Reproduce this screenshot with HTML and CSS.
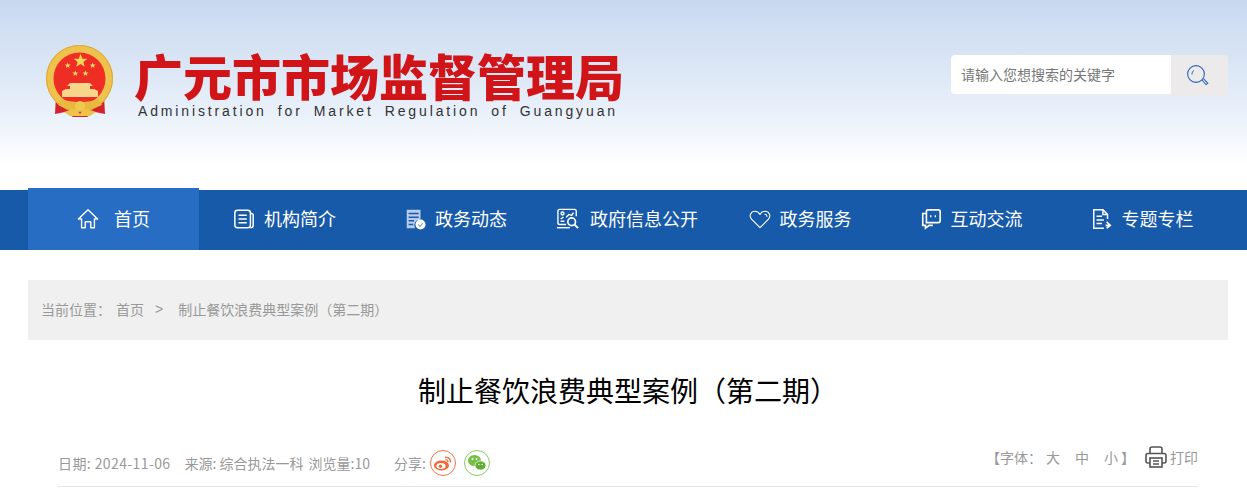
FILE: index.html
```html
<!DOCTYPE html>
<html lang="zh-CN">
<head>
  <meta charset="UTF-8" />
  <title>制止餐饮浪费典型案例（第二期）</title>
  <link rel="stylesheet" href="styles.css">
</head>
<body>
  <header class="top">
    <div class="logo">
      <svg class="emblem" viewBox="0 0 80 80" xmlns="http://www.w3.org/2000/svg">
        <defs>
          <polygon id="star" points="0,-10 2.6,-3.2 9.5,-3.1 4.1,1.3 5.9,8.1 0,4.2 -5.9,8.1 -4.1,1.3 -9.5,-3.1 -2.6,-3.2"/>
        </defs>
        <path d="M16 56 L15 74 L25 72 L33 77 H47 L55 72 L65 74 L64 56 Z" fill="#d2232a"/>
        <circle cx="39.5" cy="38.5" r="33.5" fill="#eec24c"/>
        <circle cx="39.5" cy="38.5" r="33" fill="none" stroke="#dba733" stroke-width="1"/>
        <circle cx="39.5" cy="38.5" r="26" fill="#ee2d24"/>
        <use href="#star" transform="translate(40.5 21) scale(.72)" fill="#f8d458"/>
        <use href="#star" transform="translate(27.7 25.5) scale(.32)" fill="#f8d458"/>
        <use href="#star" transform="translate(52.7 25.5) scale(.32)" fill="#f8d458"/>
        <use href="#star" transform="translate(35.3 33.5) scale(.32)" fill="#f8d458"/>
        <use href="#star" transform="translate(45.5 33.5) scale(.32)" fill="#f8d458"/>
        <path d="M30 43 H50 L53 46 H50 V49 H54 L58 51 V57 H22 V51 L26 49 H30 V46 H27 Z" fill="#f6d68a"/>
        <path d="M22 59 C30 63 50 63 58 59 L62 65 C50 71 30 71 18 65 Z" fill="#e8b83f"/>
        <circle cx="40" cy="66" r="5" fill="#f2c94f"/>
        <path d="M24 72 L36 68 L40 74 L44 68 L56 72 L50 76 H30 Z" fill="#eec24c"/>
      </svg>
      <div class="logo-text">
        <div class="site-name">广元市市场监督管理局</div>
        <div class="site-en">Administration for Market Regulation of Guangyuan</div>
      </div>
    </div>
    <div class="search">
      <div class="search-input">请输入您想搜索的关键字</div>
      <div class="search-btn">
        <svg width="24" height="24" viewBox="0 0 24 24" xmlns="http://www.w3.org/2000/svg" fill="none" stroke="#2a66b8">
          <circle cx="10" cy="10" r="8.4" stroke-width="1.1"/>
          <path d="M6 10.5 C6 8.5 6.6 7.4 7.8 6.4" stroke-width="1"/>
          <path d="M16 16 L20 20.6 L21.8 19.2 L17.4 14.6" stroke-width="1.1"/>
        </svg>
      </div>
    </div>
  </header>

  <nav class="nav">
    <a class="nav-item active">
      <svg class="nav-icon" viewBox="0 0 24 24" fill="none" stroke="#fff" stroke-width="1.5" xmlns="http://www.w3.org/2000/svg">
        <path d="M1.5 12 L12 2 L22.5 12 L19 12 V21.5 H15 V15 H9 V21.5 H5 V12 Z" stroke-linejoin="round"/>
      </svg>
      <span class="nav-label home-label">首页</span>
    </a>
    <a class="nav-item">
      <svg class="nav-icon" viewBox="0 0 24 24" fill="none" stroke="#fff" stroke-width="1.6" xmlns="http://www.w3.org/2000/svg">
        <rect x="2" y="2.5" width="17" height="19" rx="3"/>
        <path d="M19 6 H20 Q22 6 22 8 V19 Q22 21.5 19 21.5"/>
        <path d="M6 8 H15 M6 12 H15 M6 16 H15"/>
      </svg>
      <span class="nav-label">机构简介</span>
    </a>
    <a class="nav-item">
      <svg class="nav-icon" viewBox="0 0 24 24" xmlns="http://www.w3.org/2000/svg">
        <path d="M3 2 H18 V13 A6 6 0 0 0 12 22 H3 Z" fill="#b9cce8"/>
        <path d="M5 6 H16 M5 10 H16 M5 14 H11 M5 18 H10" stroke="#1a5bab" stroke-width="1.6"/>
        <circle cx="18" cy="18" r="5.5" fill="#fff"/>
        <path d="M15.5 18 L17.5 20 L20.5 16.5" fill="none" stroke="#7fa3d4" stroke-width="1.2"/>
      </svg>
      <span class="nav-label">政务动态</span>
    </a>
    <a class="nav-item">
      <svg class="nav-icon wide" viewBox="0 0 26 24" fill="none" stroke="#fff" stroke-width="1.5" xmlns="http://www.w3.org/2000/svg">
        <path d="M11 18 H4 Q2 18 2 16 V3.5 Q2 1.5 4 1.5 H20 Q22 1.5 22 3.5 V9"/>
        <path d="M1 21.5 H15"/>
        <circle cx="7" cy="6" r="1.6"/>
        <path d="M5 12 L8 10 M5 14.5 H9 M11 10 L14 7 L17 8 L19 5"/>
        <circle cx="17" cy="15" r="4.2" stroke-width="1.8"/>
        <path d="M20 18 L24 22" stroke-width="2"/>
      </svg>
      <span class="nav-label">政府信息公开</span>
    </a>
    <a class="nav-item nudge">
      <svg class="nav-icon" viewBox="0 0 24 24" fill="none" stroke="#fff" stroke-width="1.2" xmlns="http://www.w3.org/2000/svg">
        <path d="M12 21.5 L3 12.5 C-0.5 8.5 2 3.5 6.5 3.5 C9 3.5 11 5 12 7 C13 5 15 3.5 17.5 3.5 C22 3.5 24.5 8.5 21 12.5 Z" stroke-linejoin="round"/>
        <path d="M17 6.5 Q19.5 7 19.8 9.5"/>
      </svg>
      <span class="nav-label">政务服务</span>
    </a>
    <a class="nav-item nudge">
      <svg class="nav-icon" viewBox="0 0 24 24" fill="none" stroke="#fff" stroke-width="1.8" xmlns="http://www.w3.org/2000/svg">
        <path d="M7 5 V3.5 Q7 2 9 2 H20 Q22 2 22 4 V14 Q22 16 20 16 H7 V5"/>
        <path d="M7 6 H3 V19 H6 V22 L10 19 H14"/>
        <path d="M11 9 H12.5 M16 9 H17.5" stroke-width="2"/>
      </svg>
      <span class="nav-label">互动交流</span>
    </a>
    <a class="nav-item nudge">
      <svg class="nav-icon" viewBox="0 0 24 24" fill="none" stroke="#fff" stroke-width="1.6" xmlns="http://www.w3.org/2000/svg">
        <path d="M18 12 V7 L13 2 H3 V22 H14"/>
        <path d="M13 2 V7 H18"/>
        <path d="M6 9 H12 M6 13 H14 M6 17 H12"/>
        <path d="M17 15 L21 19 L17 22 M21 19 H16" stroke-width="1.8"/>
      </svg>
      <span class="nav-label">专题专栏</span>
    </a>
  </nav>

  <main class="main">
    <div class="crumb">
      <span>当前位置：</span>
      <a class="crumb-link">首页</a>
      <span class="crumb-sep">&gt;</span>
      <a>制止餐饮浪费典型案例（第二期）</a>
    </div>

    <h1 class="title">制止餐饮浪费典型案例（第二期）</h1>

    <div class="meta">
      <div class="meta-left">
        <span class="meta-date">日期: 2024-11-06</span>
        <span>来源: 综合执法一科</span>
        <span class="meta-views">浏览量:10</span>
        <span class="share-label">分享:</span>
        <span class="share weibo">
          <svg width="20" height="20" viewBox="0 0 20 20" xmlns="http://www.w3.org/2000/svg">
            <ellipse cx="8.5" cy="12.5" rx="7.5" ry="5" fill="#f0673a"/>
            <ellipse cx="8" cy="13" rx="4.6" ry="3" fill="#fff"/>
            <circle cx="7.5" cy="13.2" r="1.7" fill="#f0673a"/>
            <path d="M12 4.5 Q17.5 3.5 17.5 9.5 M12.5 7 Q15 6.5 15 9" fill="none" stroke="#f0673a" stroke-width="1.4"/>
          </svg>
        </span>
        <span class="share wechat">
          <svg width="20" height="20" viewBox="0 0 20 20" xmlns="http://www.w3.org/2000/svg">
            <ellipse cx="7.5" cy="7.5" rx="6.5" ry="5.5" fill="#76c043"/>
            <ellipse cx="13.5" cy="12.5" rx="5.5" ry="4.6" fill="#5fae33" stroke="#fff" stroke-width=".8"/>
            <circle cx="5.5" cy="6" r="1" fill="#fff"/>
            <circle cx="9.5" cy="6" r="1" fill="#fff"/>
            <circle cx="11.8" cy="11.5" r=".8" fill="#fff"/>
            <circle cx="15.2" cy="11.5" r=".8" fill="#fff"/>
          </svg>
        </span>
      </div>
      <div class="meta-right">
        <span class="font-size">【字体：<a>大</a><a>中</a><a>小</a><span class="bracket-end">】</span></span>
        <svg class="print-icon" width="22" height="22" viewBox="0 0 22 22" fill="none" stroke="#555" stroke-width="1.6" xmlns="http://www.w3.org/2000/svg">
          <path d="M5 8 V3 Q5 1 7 1 H15 Q17 1 17 3 V8"/>
          <path d="M5 17 H3 Q1 17 1 15 V9.5 Q1 7.5 3 7.5 H19 Q21 7.5 21 9.5 V15 Q21 17 19 17 H17"/>
          <rect x="5" y="12" width="12" height="9"/>
          <path d="M8 15 H14 M8 18 H14"/>
        </svg>
        <span>打印</span>
      </div>
    </div>
  </main>
</body>
</html>
```

FILE: styles.css
```css
* {
  box-sizing: border-box;
}

body {
  margin: 0;
  padding: 0;
  background: #fff;
  font-family: "Noto Sans CJK SC", sans-serif;
  color: #999;
  overflow: hidden;
}

a {
  color: inherit;
  text-decoration: none;
}

.top {
  height: 188px;
  padding: 40px 19px 0 40px;
  display: flex;
  align-items: flex-start;
  justify-content: space-between;
  background: linear-gradient(to bottom, #c8d9ef 0%, #e6eef9 55%, #fff 88%);
}

.logo {
  display: flex;
  align-items: flex-start;
  gap: 14px;
}

.emblem {
  width: 80px;
  height: 80px;
}

.site-name {
  margin-top: 10px;
  font-size: 49px;
  font-weight: 900;
  line-height: 50px;
  color: #d01418;
  white-space: nowrap;
}

.site-en {
  margin: 1px 0 0 4px;
  font-family: "Liberation Sans", sans-serif;
  font-size: 14px;
  line-height: 20px;
  letter-spacing: 2.86px;
  word-spacing: 4.3px;
  color: #333;
  white-space: nowrap;
}

.search {
  margin-top: 15px;
  display: flex;
  align-items: flex-start;
}

.search-input {
  width: 220px;
  height: 39px;
  padding-left: 10px;
  background: #fff;
  border-radius: 4px 0 0 4px;
  font-size: 14px;
  line-height: 39px;
  color: #777;
}

.search-btn {
  width: 57px;
  height: 41px;
  padding-right: 3px;
  display: flex;
  align-items: center;
  justify-content: center;
  background: #eceaea;
  border-radius: 0 4px 4px 0;
}

.nav {
  height: 60px;
  margin-top: 2px;
  padding-left: 28px;
  display: flex;
  background: #175aa9;
}

.nav-item {
  width: 171px;
  height: 60px;
  display: flex;
  align-items: center;
  justify-content: center;
  gap: 9px;
  color: #fff;
  font-size: 18px;
}

.nav-item.active {
  height: 62px;
  margin-top: -2px;
  padding-top: 2px;
  background: #276dc3;
}

.nav-item.nudge {
  padding-left: 5px;
}

.nav-label {
  margin-bottom: 5px;
}

.nav-icon {
  width: 22px;
  height: 22px;
  flex: none;
  margin-bottom: 2px;
}

.nav-icon.wide {
  width: 26px;
}

.home-label {
  margin-left: 6px;
}

.main {
  width: 1200px;
  margin: 30px 0 0 28px;
}

.crumb {
  height: 60px;
  padding: 0 0 2px 13px;
  display: flex;
  align-items: center;
  background: #f0f0f0;
  font-size: 14px;
  color: #999;
}

.crumb-link {
  margin-left: 5px;
}

.crumb-sep {
  margin: 0 15px 0 11px;
  font-family: "Liberation Sans", sans-serif;
}

.title {
  margin: 30px 0 0;
  font-size: 28px;
  font-weight: 400;
  line-height: 40px;
  text-align: center;
  color: #000;
}

.meta {
  margin: 0 30px;
  height: 77px;
  padding-top: 34px;
  display: flex;
  justify-content: space-between;
  align-items: flex-start;
  border-bottom: 1px solid #e5e5e5;
  font-size: 14px;
}

.meta-left {
  display: flex;
  align-items: center;
  height: 26px;
  margin-top: 6px;
}

.meta-date {
  margin-right: 14px;
  letter-spacing: .4px;
}

.meta-views {
  margin-left: 5px;
}

.share-label {
  margin-left: 24px;
  margin-right: 4px;
}

.share {
  width: 26px;
  height: 26px;
  margin-right: 8px;
  display: flex;
  align-items: center;
  justify-content: center;
  border-radius: 50%;
  background: #fff;
}

.weibo {
  border: 1px solid #f0734a;
}

.wechat {
  border: 1px solid #8acb63;
}

.meta-right {
  display: flex;
  align-items: center;
  height: 26px;
  color: #999;
}

.font-size a {
  margin-left: 15px;
}

.font-size a:first-child {
  margin-left: 4px;
}

.bracket-end {
  margin-left: 3px;
}

.print-icon {
  margin: 0 3px 0 10px;
}
```
